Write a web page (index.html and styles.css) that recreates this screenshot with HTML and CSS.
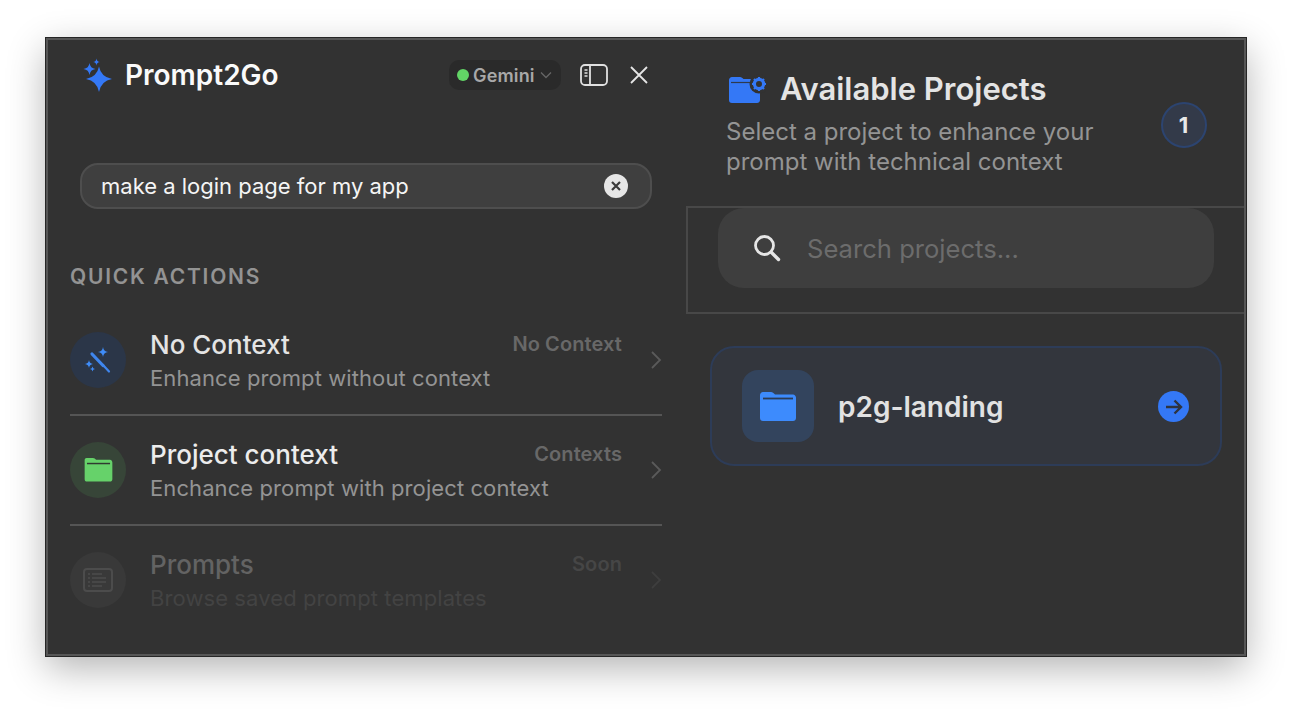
FILE: index.html
```html
<!DOCTYPE html>
<html lang="en">
<head>
<meta charset="utf-8">
<title>Prompt2Go</title>
<link rel="stylesheet" href="styles.css">
</head>
<body>
<main class="window">
  <section class="left">
    <header class="top">
      <svg class="logo" viewBox="0 0 30 38" width="30" height="38"><path fill="#3478f6" d="M16 11.500Q18 22 29 24Q18 26 16 37Q14 26 3 24Q14 22 16 11.500z"/><path fill="#3478f6" d="M6.500 8Q7.200 13.300 12.500 14Q7.200 14.700 6.500 20Q5.800 14.700 .5 14Q5.800 13.300 6.500 8z"/><path fill="#3478f6" d="M13.500 3.500Q13.900 6.600 17 7Q13.900 7.400 13.500 10.500Q13.100 7.400 10 7Q13.100 6.600 13.500 3.500z"/></svg>
      <h1 class="brand">Prompt2Go</h1>
      <div class="model"><span class="dot"></span><span>Gemini</span>
        <svg width="12" height="8" viewBox="0 0 12 8"><path d="M1 1.500l5 5 5-5" fill="none" stroke="#666" stroke-width="1.300"/></svg>
      </div>
      <svg class="panel-ic" width="28" height="22" viewBox="0 0 28 22"><rect x="1" y="1" width="26" height="20" rx="4" fill="none" stroke="#e0e0e0" stroke-width="1.800"/><path d="M10 1v20" stroke="#e0e0e0" stroke-width="1.800"/><path d="M4.500 6h3M4.500 9h3M4.500 12h3" stroke="#e0e0e0" stroke-width="1.300"/></svg>
      <svg class="close-ic" width="20" height="20" viewBox="0 0 20 20"><path d="M2 2l16 16M18 2L2 18" stroke="#e6e6e6" stroke-width="1.800"/></svg>
    </header>

    <div class="query">
      <span class="query-text">make a login page for my app</span>
      <span class="clear"><svg width="12" height="12" viewBox="0 0 12 12"><path d="M2 2l8 8M10 2l-8 8" stroke="#3a3a3a" stroke-width="2.200"/></svg></span>
    </div>

    <h2 class="section">QUICK ACTIONS</h2>

    <div class="row line">
      <div class="circle c-blue">
        <svg width="28" height="28" viewBox="0 0 28 28"><path d="M8 8l11 11.500" stroke="#3f86ee" stroke-width="3.200" stroke-linecap="round"/><path d="M19 19l6 6.500" stroke="#3f86ee" stroke-width="2.200" stroke-linecap="round"/><path fill="#3f8cf8" d="M19 1Q19.500 5.500 24 6Q19.500 6.500 19 11Q18.500 6.500 14 6Q18.500 5.500 19 1zM5 14Q5.400 17.600 9 18Q5.400 18.400 5 22Q4.600 18.400 1 18Q4.600 17.600 5 14zM8.500 20.500Q8.700 22.800 11 23Q8.700 23.200 8.500 25.500Q8.300 23.200 6 23Q8.300 22.800 8.500 20.500z"/></svg>
      </div>
      <div class="body">
        <div class="head"><span class="title">No Context</span><span class="tag">No Context</span></div>
        <div class="sub">Enhance prompt without context</div>
      </div>
      <svg class="chev" width="12" height="20" viewBox="0 0 12 20"><path d="M2 2l8 8-8 8" fill="none" stroke="#5a5a5a" stroke-width="1.800"/></svg>
    </div>

    <div class="row line">
      <div class="circle c-green">
        <svg width="29" height="24" viewBox="0 0 30 26"><path fill="#66d26a" d="M2 0h7c1.500 0 2.500 1 3.500 2h15c1.200 0 2.500 1.200 2.500 3v18c0 1.500-1.200 2.500-2.500 2.500h-25C1 25.500 0 24.500 0 23V2C0 1 1 0 2 0z"/><path d="M2.500 6h25" stroke="#2f3a30" stroke-width="1.600"/></svg>
      </div>
      <div class="body">
        <div class="head"><span class="title bright">Project context</span><span class="tag">Contexts</span></div>
        <div class="sub">Enchance prompt with project context</div>
      </div>
      <svg class="chev" width="12" height="20" viewBox="0 0 12 20"><path d="M2 2l8 8-8 8" fill="none" stroke="#5a5a5a" stroke-width="1.800"/></svg>
    </div>

    <div class="row dim">
      <div class="circle c-grey">
        <svg width="30" height="24" viewBox="0 0 30 24"><rect x="1" y="1" width="28" height="22" rx="3" fill="none" stroke="#4c4c4c" stroke-width="2"/><path d="M5 6h2M5 10h2M5 14h2M5 18h2M9 6h10M9 10h14M9 14h14M9 18h10" stroke="#4c4c4c" stroke-width="1.400"/></svg>
      </div>
      <div class="body">
        <div class="head"><span class="title">Prompts</span><span class="tag">Soon</span></div>
        <div class="sub">Browse saved prompt templates</div>
      </div>
      <svg class="chev" width="12" height="20" viewBox="0 0 12 20"><path d="M2 2l8 8-8 8" fill="none" stroke="#3e3e3e" stroke-width="1.800"/></svg>
    </div>
  </section>

  <section class="right">
    <header class="r-head">
      <div class="r-text">
        <div class="r-title">
          <svg width="38" height="30" viewBox="0 0 38 30"><path fill="#3478f6" d="M4 3h8c1.500 0 2.500 1 3.500 2h12.500c2 0 4 1 4 4v17c0 2-1.500 3-3 3H4c-2 0-3-1-3-3V6c0-1.500 1.300-3 3-3z"/><path d="M3 8.500h24" stroke="#2f3a4d" stroke-width="1.200"/><circle cx="31" cy="10" r="9.500" fill="#323232"/><circle cx="31" cy="10" r="4.600" fill="none" stroke="#3478f6" stroke-width="3.200"/><path d="M31 3v3M31 14v3M24 10h3M35 10h3M26 5l2 2M34 13l2 2M36 5l-2 2M28 13l-2 2" stroke="#3478f6" stroke-width="2.200"/></svg>
          <h2>Available Projects</h2>
        </div>
        <p>Select a project to enhance your prompt with technical context</p>
      </div>
      <div class="count">1</div>
    </header>

    <div class="search-wrap">
      <div class="search">
        <svg width="30" height="30" viewBox="0 0 30 30"><circle cx="12.500" cy="12.500" r="9" fill="none" stroke="#e6e6e6" stroke-width="2.800"/><path d="M19.500 19.500l7 7" stroke="#e6e6e6" stroke-width="3.400" stroke-linecap="round"/></svg>
        <span class="ph">Search projects...</span>
      </div>
    </div>

    <div class="card">
      <div class="tile">
        <svg width="36" height="29" viewBox="0 0 36 29"><path fill="#3d8bfd" d="M3 0h8c1.500 0 2.500 1 4 2.500h18c1.500 0 3 1.500 3 3V26c0 1.800-1.300 3-3 3H3c-1.800 0-3-1.200-3-3V3c0-1.500 1.300-3 3-3z"/><path d="M3 6.500h30" stroke="#2c3c55" stroke-width="1.800"/></svg>
      </div>
      <span class="p-name">p2g-landing</span>
      <span class="go"><svg width="20" height="18" viewBox="0 0 20 18"><path d="M2 9h15M10.500 2.500L17 9l-6.500 6.500" fill="none" stroke="#2e3440" stroke-width="2.400"/></svg></span>
    </div>
  </section>
</main>
</body>
</html>
```

FILE: styles.css
```css
* { box-sizing: border-box; margin: 0; padding: 0; }
html, body { height: 100%; }
body {
  background: #fff;
  padding: 38px 46px;
  font-family: Inter, "Liberation Sans", sans-serif;
  overflow: hidden;
}
.window {
  display: flex;
  width: 1200px;
  height: 618px;
  background: #323232;
  border: 2px solid #565656;
  box-shadow: 0 0 0 1px #262626, 0 12px 36px rgba(0, 0, 0, .3);
}
.left { width: 638px; flex: none; padding: 15px 24px 0 22px; }
.top { display: flex; align-items: center; height: 40px; padding: 0 13px; }
.logo { flex: none; margin-right: 12px; margin-top: -2px; }
.brand { font-size: 28px; font-weight: 600; color: #fafafa; line-height: 40px; flex: 1; }
.model {
  display: flex; align-items: center; gap: 5px;
  height: 30px; width: 112px; padding-left: 8px;
  background: #2a2a2a; border-radius: 10px;
  font-size: 18px; font-weight: 600; letter-spacing: .15px; color: #a8a8a8;
  margin-right: 19px;
}
.dot { width: 12px; height: 12px; border-radius: 50%; background: #62d566; flex: none; margin-right: -1px; }
.panel-ic { flex: none; margin-right: 21px; }
.close-ic { flex: none; }
.query {
  display: flex; align-items: center; justify-content: space-between;
  height: 46px; margin: 68px 10px 0;
  padding: 0 22px 0 19px;
  background: #3f3f3f; border: 2px solid #4e4e4e; border-radius: 18px;
}
.query-text { font-size: 22px; color: #f5f5f5; }
.clear {
  width: 24px; height: 24px; border-radius: 50%; background: #e6e6e6;
  display: flex; align-items: center; justify-content: center;
}
.section {
  margin-top: 56px; line-height: 24px;
  font-size: 21px; font-weight: 600; letter-spacing: 1.750px; color: #939393;
}
.row { display: flex; align-items: center; height: 110px; padding-bottom: 2px; }
.section + .row { margin-top: 17px; }
.row.line { border-bottom: 2px solid #555; padding-bottom: 0; }
.circle {
  width: 56px; height: 56px; border-radius: 50%; flex: none;
  display: flex; align-items: center; justify-content: center;
  margin-right: 24px;
}
.c-blue { background: #2b3648; }
.c-green { background: #374538; }
.c-grey { background: #393939; }
.body { flex: 1; padding-right: 28px; padding-top: 2px; }
.head { display: flex; align-items: flex-start; justify-content: space-between; }
.title { font-size: 26px; font-weight: 500; line-height: 30px; color: #e4e4e4; }
.title.bright { color: #ececec; }
.tag { font-size: 20px; font-weight: 600; letter-spacing: .1px; line-height: 28px; color: #686868; }
.sub { font-size: 22px; letter-spacing: .09px; line-height: 28px; margin-top: 4px; color: #949494; }
.chev { flex: none; margin-right: 0; }
.dim .title { color: #636363; }
.dim .tag { color: #464646; }
.dim .sub { color: #434343; }
.right { flex: 1; min-width: 0; }
.r-head { display: flex; align-items: center; justify-content: space-between; height: 166px; padding: 33px 37px 29px 40px; }
.r-text { width: 400px; }
.r-title { display: flex; align-items: center; gap: 14px; padding-left: 2px; height: 32px; }
.r-title h2 { font-size: 31px; font-weight: 600; color: #e4e4e4; line-height: 32px; }
.r-text p { margin-top: 12px; font-size: 24px; line-height: 30px; color: #949494; }
.count {
  width: 46px; height: 46px; border-radius: 50%; flex: none;
  background: #333a49; border: 2px solid #2c4470;
  display: flex; align-items: center; justify-content: center;
  font-size: 22px; font-weight: 700; color: #e8e8e8; padding-right: 1px;
}
.search-wrap { border: 2px solid #484848; border-right: 0; padding: 0 30px 24px; }
.search {
  display: flex; align-items: center; height: 80px; padding-left: 34px; gap: 25px;
  background: #3e3e3e; border-radius: 26px;
}
.ph { font-size: 25.600px; color: #6c6c6c; }
.card {
  display: flex; align-items: center;
  height: 120px; margin: 32px 22px 0 24px; padding: 0 31px 0 30px;
  background: #33363d; border: 2px solid #2d3c58; border-radius: 24px;
}
.tile {
  width: 72px; height: 72px; border-radius: 16px; background: #33445d; flex: none;
  display: flex; align-items: center; justify-content: center; margin-right: 24px;
}
.p-name { flex: 1; font-size: 28px; font-weight: 600; color: #e2e2e2; padding-top: 2px; }
.go {
  width: 31px; height: 31px; border-radius: 50%; background: #3478f6; flex: none;
  display: flex; align-items: center; justify-content: center; margin-top: 1px;
}
```
